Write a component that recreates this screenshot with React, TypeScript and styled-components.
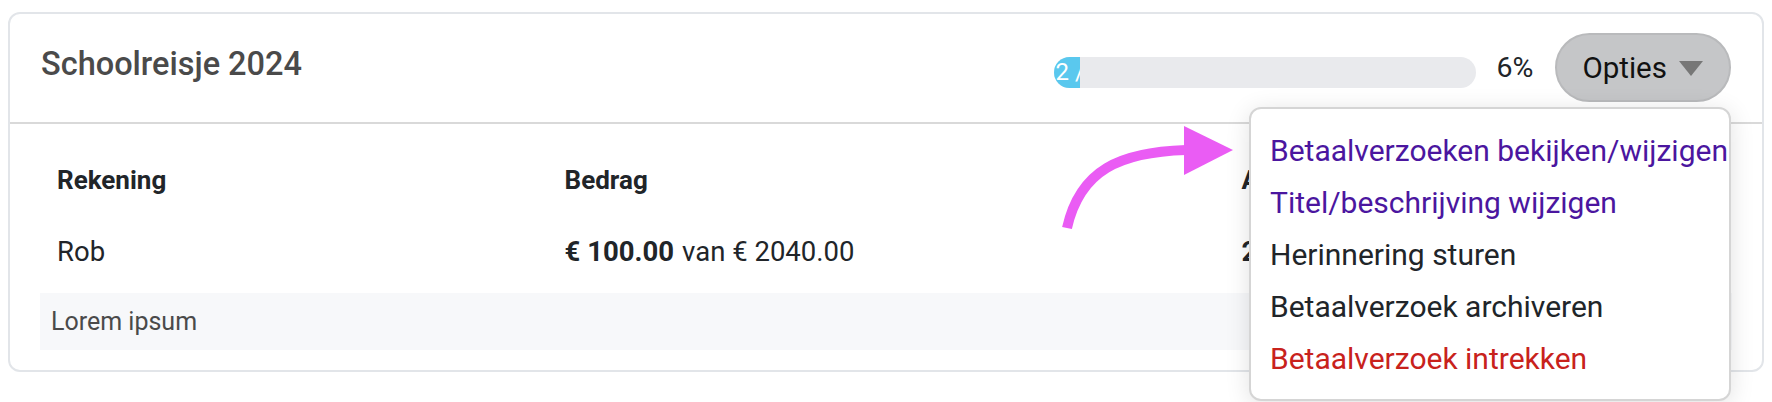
import React from "react";
import styled, { createGlobalStyle } from "styled-components";

const GlobalStyle = createGlobalStyle`
  html, body {
    margin: 0;
    padding: 0;
    background: #ffffff;
  }
  body {
    font-family: Roboto, "Noto Sans", Arial, sans-serif;
    color: #212529;
  }
  * { box-sizing: border-box; }
`;

const Page = styled.div`
  position: relative;
  padding: 12px 8px 0;
  height: 402px;
  overflow: hidden;
`;

const Card = styled.section`
  border: 2px solid #e2e5e9;
  border-radius: 12px;
  background: #fff;
`;

const CardHeader = styled.header`
  position: relative;
  display: flex;
  align-items: center;
  padding: 19px 31px 20px;
  border-bottom: 2px solid #d9d9d9;
`;

const Title = styled.h2`
  margin: 11px 0 0;
  align-self: flex-start;
  font-size: 32.5px;
  line-height: 40px;
  font-weight: 500;
  color: #4a4a4a;
`;

const HeaderRight = styled.div`
  margin-left: auto;
  display: flex;
  align-items: center;
`;

const ProgressTrack = styled.div`
  width: 422px;
  height: 31px;
  margin-top: 10px;
  border-radius: 16px;
  background: #e9eaed;
  overflow: hidden;
  display: flex;
`;

const ProgressFill = styled.div`
  height: 100%;
  background: #5ac8ee;
  color: #fff;
  font-size: 24px;
  line-height: 31px;
  white-space: nowrap;
  overflow: hidden;
  padding-left: 2px;
`;

const Percent = styled.span`
  margin: 0 22px 0 21px;
  font-size: 28.5px;
  line-height: 34px;
  color: #212529;
`;

const OptionsButton = styled.button`
  display: flex;
  align-items: center;
  gap: 12px;
  height: 69px;
  padding: 0 26px 0 25px;
  border: 2px solid #b9babc;
  border-radius: 35px;
  background: #c5c6c8;
  font-family: inherit;
  font-size: 29.5px;
  color: #111;
  cursor: pointer;
`;

const Caret = styled.span`
  width: 0;
  height: 0;
  border-left: 12px solid transparent;
  border-right: 12px solid transparent;
  border-top: 15px solid #777;
  margin-top: 2px;
`;

const Menu = styled.ul`
  position: absolute;
  top: 93px;
  right: 31px;
  width: 482px;
  margin: 0;
  padding: 16px 0 14px 19px;
  list-style: none;
  background: #fff;
  border: 2px solid #d5d5d5;
  border-radius: 12px;
  box-shadow: 0 4px 24px rgba(0, 0, 0, 0.12);
  z-index: 2;
`;

const MenuItem = styled.li<{ $tone: "link" | "plain" | "danger" }>`
  font-size: 30px;
  line-height: 52px;
  white-space: nowrap;
  color: ${(p) =>
    p.$tone === "link" ? "#4b169f" : p.$tone === "danger" ? "#c8221c" : "#212529"};
`;

const CardBody = styled.div`
  padding: 0 30px 20px;
`;

const Grid = styled.div`
  display: grid;
  grid-template-columns: 30% 40% 30%;
`;

const HeadCell = styled.div`
  padding: 37px 17px 16px;
  font-size: 26px;
  line-height: 39px;
  font-weight: 700;
  color: #212529;
`;

const Cell = styled.div`
  padding: 16px 17px 21px;
  font-size: 27.5px;
  line-height: 40px;
  color: #212529;
  white-space: nowrap;
`;

const Strong = styled.strong`
  font-weight: 700;
  margin-right: 8px;
`;

const Note = styled.div`
  height: 57px;
  padding: 0 11px;
  background: #f7f8fa;
  font-size: 25px;
  line-height: 57px;
  color: #4a4a4a;
`;

const ArrowSvg = styled.svg`
  position: absolute;
  left: 1055px;
  top: 120px;
  pointer-events: none;
  z-index: 3;
`;

const menuItems: { label: string; tone: "link" | "plain" | "danger" }[] = [
  { label: "Betaalverzoeken bekijken/wijzigen", tone: "link" },
  { label: "Titel/beschrijving wijzigen", tone: "link" },
  { label: "Herinnering sturen", tone: "plain" },
  { label: "Betaalverzoek archiveren", tone: "plain" },
  { label: "Betaalverzoek intrekken", tone: "danger" },
];

export default function App() {
  const paid = 2;
  const total = 32;
  const pct = (paid / total) * 100;
  return (
    <>
      <GlobalStyle />
      <Page>
        <Card>
          <CardHeader>
            <Title>Schoolreisje 2024</Title>
            <HeaderRight>
              <ProgressTrack>
                <ProgressFill style={{ width: `${pct}%` }}>
                  {paid} / {total}
                </ProgressFill>
              </ProgressTrack>
              <Percent>{Math.round(pct)}%</Percent>
              <OptionsButton type="button">
                Opties
                <Caret />
              </OptionsButton>
            </HeaderRight>
            <Menu>
              {menuItems.map((m) => (
                <MenuItem key={m.label} $tone={m.tone}>
                  {m.label}
                </MenuItem>
              ))}
            </Menu>
          </CardHeader>
          <CardBody>
            <Grid>
              <HeadCell>Rekening</HeadCell>
              <HeadCell>Bedrag</HeadCell>
              <HeadCell>Aantal betaald</HeadCell>
              <Cell>Rob</Cell>
              <Cell>
                <Strong>€ 100.00</Strong>van € 2040.00
              </Cell>
              <Cell>
                <Strong>2</Strong>/ 32
              </Cell>
            </Grid>
            <Note>Lorem ipsum</Note>
          </CardBody>
        </Card>
        <ArrowSvg width="185" height="115" viewBox="0 0 185 115">
          <path
            d="M12 108 C 25 50, 65 32, 131 30"
            fill="none"
            stroke="#ea5cf4"
            strokeWidth="10"
          />
          <polygon points="129,6 129,55 178,30" fill="#ea5cf4" />
        </ArrowSvg>
      </Page>
    </>
  );
}
